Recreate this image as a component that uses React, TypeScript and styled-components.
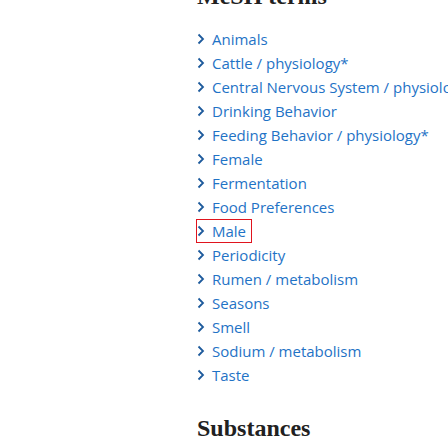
import styled, { createGlobalStyle } from "styled-components";

const GlobalStyle = createGlobalStyle`
  body {
    margin: 0;
    background: #fff;
    overflow: hidden;
  }
`;

const Page = styled.div`
  display: flow-root;
  padding-left: 197px;
  height: 448px;
  overflow: hidden;
`;

const Heading = styled.h2<{ $cut?: boolean }>`
  margin: ${(p) => (p.$cut ? "-19px 0 0" : "26px 0 0")};
  font-family: "Liberation Serif", "DejaVu Serif", serif;
  font-weight: bold;
  font-size: 24px;
  line-height: 30px;
  color: #212121;
`;

const TermList = styled.ul`
  list-style: none;
  margin: 16px 0 0;
  padding: 0;
`;

const Term = styled.li`
  display: flex;
  height: 24px;
  align-items: center;
  white-space: nowrap;
`;

const TermLink = styled.span<{ $active?: boolean }>`
  display: inline-flex;
  align-items: center;
  gap: 7px;
  height: ${(p) => (p.$active ? "22px" : "24px")};
  padding-right: ${(p) => (p.$active ? "5px" : "0")};
  margin-left: ${(p) => (p.$active ? "-1px" : "0")};
  border: ${(p) => (p.$active ? "1px solid #e0141e" : "none")};
  cursor: pointer;
`;

const Label = styled.span`
  font-family: "Open Sans", "Noto Sans", sans-serif;
  font-size: 15px;
  line-height: 20px;
  color: #1f73c6;
`;

const Chevron = () => (
  <svg width="8" height="12" viewBox="0 0 8 12">
    <path d="M1.5 1.5 L6 6 L1.5 10.5" fill="none" stroke="#1d5a9c" strokeWidth="1.8" />
  </svg>
);

const terms = [
  "Animals",
  "Cattle / physiology*",
  "Central Nervous System / physiology",
  "Drinking Behavior",
  "Feeding Behavior / physiology*",
  "Female",
  "Fermentation",
  "Food Preferences",
  "Male",
  "Periodicity",
  "Rumen / metabolism",
  "Seasons",
  "Smell",
  "Sodium / metabolism",
  "Taste",
];

export default function App() {
  return (
    <Page>
      <GlobalStyle />
      <Heading $cut>MeSH terms</Heading>
      <TermList>
        {terms.map((t) => (
          <Term key={t}>
            <TermLink $active={t === "Male"}>
              <Chevron />
              <Label>{t}</Label>
            </TermLink>
          </Term>
        ))}
      </TermList>
      <Heading>Substances</Heading>
    </Page>
  );
}
